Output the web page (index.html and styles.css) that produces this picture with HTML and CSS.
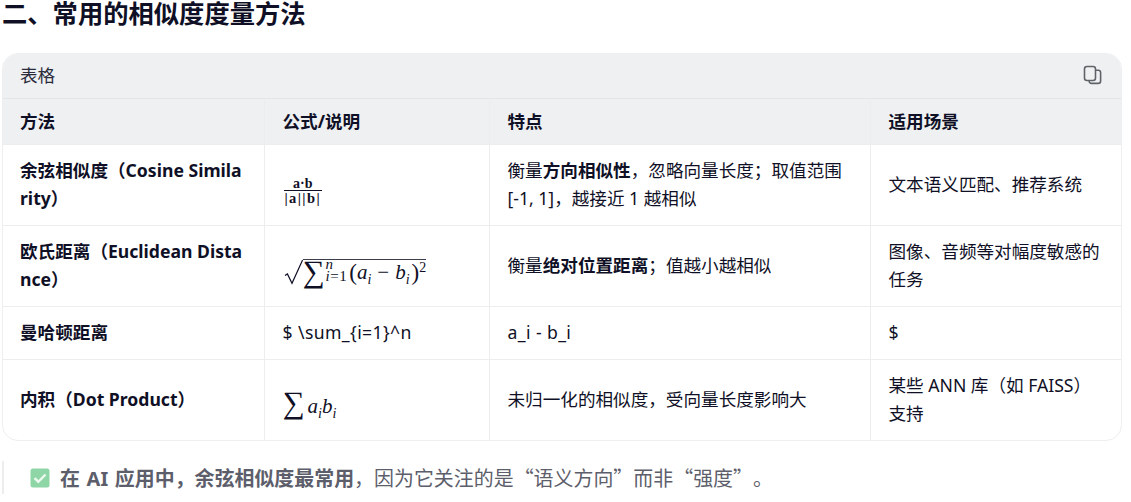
FILE: index.html
```html
<!DOCTYPE html>
<html lang="zh">
<head>
<meta charset="utf-8">
<title>常用的相似度度量方法</title>
<link rel="stylesheet" href="styles.css">
</head>
<body>
<main class="page">
  <h2 class="title">二、常用的相似度度量方法</h2>
  <section class="card">
    <div class="caption">
      <span>表格</span>
      <svg class="copy" viewBox="0 0 20 20" width="20" height="20" fill="none" stroke="#5f6368" stroke-width="1.6"><rect x="1.5" y="1.5" width="11" height="14" rx="2.4"/><path d="M12.6 5.2h2.8a2.2 2.2 0 0 1 2.2 2.2v8.6a2.4 2.4 0 0 1-2.4 2.4H8.4a2.2 2.2 0 0 1-2.2-2.2v-.6"/></svg>
    </div>
    <table class="grid">
      <colgroup><col class="c1"><col class="c2"><col class="c3"><col class="c4"></colgroup>
      <thead>
        <tr><th>方法</th><th>公式/说明</th><th>特点</th><th>适用场景</th></tr>
      </thead>
      <tbody>
        <tr>
          <td class="name">余弦相似度（Cosine Similarity）</td>
          <td>
            <span class="math frac"><span class="num">a·b</span><span class="den">|a||b|</span></span>
          </td>
          <td>衡量<b>方向相似性</b>，忽略向量长度；取值范围 [-1, 1]，越接近 1 越相似</td>
          <td>文本语义匹配、推荐系统</td>
        </tr>
        <tr>
          <td class="name">欧氏距离（Euclidean Distance）</td>
          <td>
            <span class="math root"><svg class="radical" viewBox="0 0 19 26" width="19" height="26" fill="none" stroke="#0f1026"><path d="M1 16.5l2.4-1.6 4.6 9.4L18.6 1" stroke-width="1.2"/></svg><span class="radicand"><span class="sum">∑</span><span class="limits"><span class="up">n</span><span class="low"><i>i</i>=1</span></span><span class="paren">(</span><i>a<sub>i</sub></i><span class="minus">−</span><i>b<sub>i</sub></i><span class="paren">)</span><sup class="pow">2</sup></span></span>
          </td>
          <td>衡量<b>绝对位置距离</b>；值越小越相似</td>
          <td>图像、音频等对幅度敏感的任务</td>
        </tr>
        <tr>
          <td class="name">曼哈顿距离</td>
          <td class="plain">$ \sum_{i=1}^n</td>
          <td class="plain">a_i - b_i</td>
          <td class="plain">$</td>
        </tr>
        <tr>
          <td class="name">内积（Dot Product）</td>
          <td>
            <span class="math dot"><span class="sum">∑</span><i class="terms">a<sub>i</sub>b<sub>i</sub></i></span>
          </td>
          <td>未归一化的相似度，受向量长度影响大</td>
          <td>某些 ANN 库（如 FAISS）支持</td>
        </tr>
      </tbody>
    </table>
  </section>
  <blockquote class="note">
    <svg class="check" viewBox="0 0 20 20" width="20" height="20"><rect x="0.5" y="0.5" width="19" height="19" rx="2.5" fill="#8fd6a6"/><path d="M4.6 10.2l3.7 3.7 7.2-7.4" fill="none" stroke="#eef9f1" stroke-width="2.4"/></svg>
    <span><b class="lead">在 AI 应用中，余弦相似度最常用</b>，因为它关注的是<span class="q">“</span>语义方向<span class="q">”</span>而非<span class="q">“</span>强度<span class="q">”</span>。</span>
  </blockquote>
</main>
</body>
</html>
```

FILE: styles.css
```css
* { box-sizing: border-box; }
html, body { margin: 0; padding: 0; background: #fff; }
body {
  font-family: "Noto Sans", "Noto Sans CJK SC", sans-serif;
  font-size: 17.6px;
  color: #0f1026;
  overflow: hidden;
}
.page { height: 502px; padding: 0 9px 0 2px; }
.title {
  margin: 0;
  height: 53px;
  font-size: 25.3px;
  line-height: 26px;
  font-weight: 700;
  color: #0f1026;
}
.card {
  border: 1px solid #eeeff1;
  border-radius: 16px;
  overflow: hidden;
  margin-bottom: 20px;
}
.caption {
  display: flex;
  align-items: center;
  justify-content: space-between;
  height: 45px;
  padding: 0 18px 3px 17px;
  background: #eff0f2;
  border-bottom: 1px solid #e4e5e8;
  color: #2a2b3a;
}
.copy { display: block; }
.grid {
  width: 100%;
  table-layout: fixed;
  border-collapse: collapse;
  line-height: 28px;
}
.c1 { width: 261px; }
.c2 { width: 225px; }
.c3 { width: 381px; }
.grid th, .grid td {
  text-align: left;
  padding: 11px 18px 13px;
  border-left: 1px solid #eceded;
  border-top: 1px solid #eceded;
  word-break: break-all;
}
.grid th:first-child, .grid td:first-child { border-left: 0; padding-left: 17px; }
.grid th {
  background: #eff0f2;
  font-weight: 700;
  border-top: 0;
  padding-top: 8px;
  padding-bottom: 9px;
}
.grid td { vertical-align: middle; }
.name { font-weight: 700; }
.grid b { font-weight: 700; }
.plain { letter-spacing: 0.4px; }
.math {
  font-family: "Liberation Serif", serif;
  display: inline-block;
  vertical-align: middle;
  color: #0f1026;
  line-height: 1;
  word-break: normal;
  letter-spacing: 0;
}
.frac {
  font-weight: 700;
  text-align: center;
  margin-top: 14px;
  margin-left: 1px;
  font-size: 14px;
}
.num { display: block; border-bottom: 1px solid #0f1026; line-height: 12px; }
.den { display: block; line-height: 14px; padding: 0 1px; font-size: 14.5px; letter-spacing: 1.4px; }
.root { display: inline-flex; align-items: flex-start; font-size: 21px; margin-top: 13px; margin-left: 1px; }
.radical { flex: none; display: block; }
.radicand {
  display: inline-flex;
  align-items: center;
  border-top: 1.5px solid #3c3d4d;
  height: 26px;
  white-space: pre;
}
.sum { font-size: 31px; line-height: 24px; display: inline-block; }
.limits { display: inline-flex; flex-direction: column; font-size: 15px; line-height: 13px; margin-left: 1px; letter-spacing: 0.5px; }
.up { font-style: italic; margin-top: -4px; }
.low { margin-top: -1px; }
.paren { margin-left: 2px; font-size: 23px; }
.math sub { font-size: 14px; line-height: 0; }
.minus { margin: 0 6px; }
.pow { font-size: 14px; line-height: 0; vertical-align: 7px; margin-top: -8px; }
.dot { font-size: 21px; margin-top: 10px; }
.terms { margin-left: 3px; }
.note {
  margin: 0;
  height: 33px;
  border-left: 2px solid #eceded;
  padding-left: 26px;
  display: flex;
  align-items: center;
  gap: 10px;
  color: #5d5e6b;
  font-size: 19.95px;
  line-height: 33px;
  text-spacing-trim: space-all;
}
.lead { word-spacing: 1.5px; }
.q { font-family: "Noto Sans CJK SC", sans-serif; }
.check { flex: none; }
```
